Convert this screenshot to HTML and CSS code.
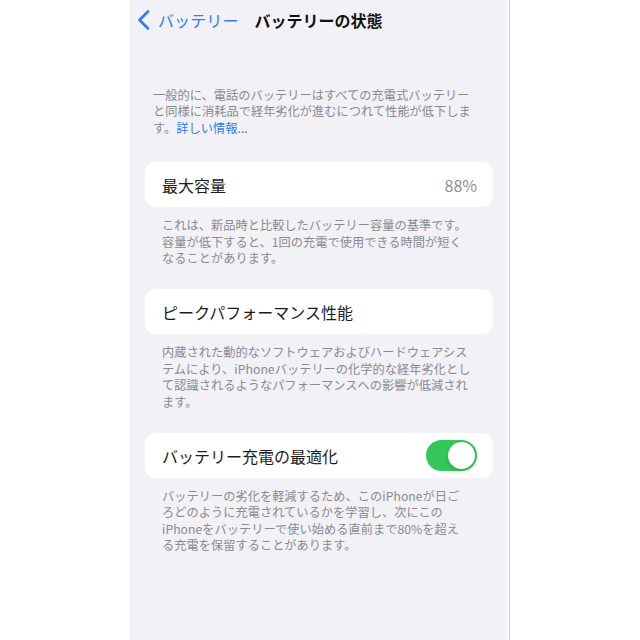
FILE: index.html
```html
<!DOCTYPE html>
<html lang="ja">
<head>
<meta charset="utf-8">
<link rel="stylesheet" href="styles.css">
</head>
<body>
<div class="page">
  <div class="panel">
    <div class="nav">
      <div class="back">
        <svg class="chev" width="14" height="20" viewBox="0 0 14 20"><path d="M11 1.5 L2.5 10 L11 18.5" fill="none" stroke="#2f7cf6" stroke-width="2.6" stroke-linecap="round" stroke-linejoin="round"/></svg>
        <span class="back-label">バッテリー</span>
      </div>
      <div class="title">バッテリーの状態</div>
    </div>

    <p class="note note-top">一般的に、電話のバッテリーはすべての充電式バッテリー<br>と同様に消耗品で経年劣化が進むにつれて性能が低下しま<br>す。<span class="link">詳しい情報...</span></p>

    <div class="card card-first">
      <span class="label">最大容量</span>
      <span class="value">88%</span>
    </div>
    <p class="note">これは、新品時と比較したバッテリー容量の基準です。<br>容量が低下すると、1回の充電で使用できる時間が短く<br>なることがあります。</p>

    <div class="card">
      <span class="label">ピークパフォーマンス性能</span>
    </div>
    <p class="note">内蔵された動的なソフトウェアおよびハードウェアシス<br>テムにより、iPhoneバッテリーの化学的な経年劣化とし<br>て認識されるようなパフォーマンスへの影響が低減され<br>ます。</p>

    <div class="card">
      <span class="label">バッテリー充電の最適化</span>
      <span class="toggle"><span class="knob"></span></span>
    </div>
    <p class="note">バッテリーの劣化を軽減するため、このiPhoneが日ご<br>ろどのように充電されているかを学習し、次にこの<br>iPhoneをバッテリーで使い始める直前まで80%を超え<br>る充電を保留することがあります。</p>
  </div>
  <div class="edge"></div>
</div>
</body>
</html>
```

FILE: styles.css
```css
html, body {
  margin: 0;
  padding: 0;
  background: #ffffff;
}
body {
  font-family: "Noto Sans CJK JP", "Noto Sans", sans-serif;
  width: 640px;
  height: 640px;
  overflow: hidden;
}
.page {
  display: flex;
  height: 640px;
  padding-left: 130px;
}
.panel {
  width: 377px;
  height: 640px;
  background: #f1f1f6;
  display: flex;
  flex-direction: column;
}
.edge {
  width: 1px;
  height: 640px;
  margin-left: 2px;
  background: #c9c9cc;
}
.nav {
  display: flex;
  align-items: center;
  height: 40px;
  padding-left: 7px;
}
.back {
  display: flex;
  align-items: center;
  gap: 7px;
}
.chev {
  display: block;
}
.back-label {
  color: #2f7cf6;
  font-size: 16px;
  letter-spacing: 0.1px;
}
.title {
  margin-left: 16px;
  font-size: 16px;
  font-weight: 700;
  color: #111113;
}
.note {
  margin: 10px 0 0 32px;
  font-size: 12.2px;
  line-height: 16.4px;
  color: #8a8a8f;
  letter-spacing: 0.05px;
}
.note-top {
  margin: 47px 0 0 23px;
}
.link {
  color: #2f7cf6;
}
.card {
  margin: 23px 0 0 15px;
  width: 348px;
  height: 45px;
  box-sizing: border-box;
  background: #ffffff;
  border-radius: 10px;
  display: flex;
  align-items: center;
  justify-content: space-between;
  padding: 0 16px 0 17px;
}
.card-first {
  margin-top: 26px;
}
.label {
  font-size: 16px;
  color: #1c1c1e;
}
.value {
  font-size: 16px;
  color: #8e8e93;
}
.toggle {
  width: 51px;
  height: 31px;
  border-radius: 16px;
  background: #34c759;
  position: relative;
}
.knob {
  position: absolute;
  top: 2px;
  right: 2px;
  width: 27px;
  height: 27px;
  border-radius: 50%;
  background: #ffffff;
  box-shadow: 0 2px 4px rgba(0,0,0,0.15);
}
```
